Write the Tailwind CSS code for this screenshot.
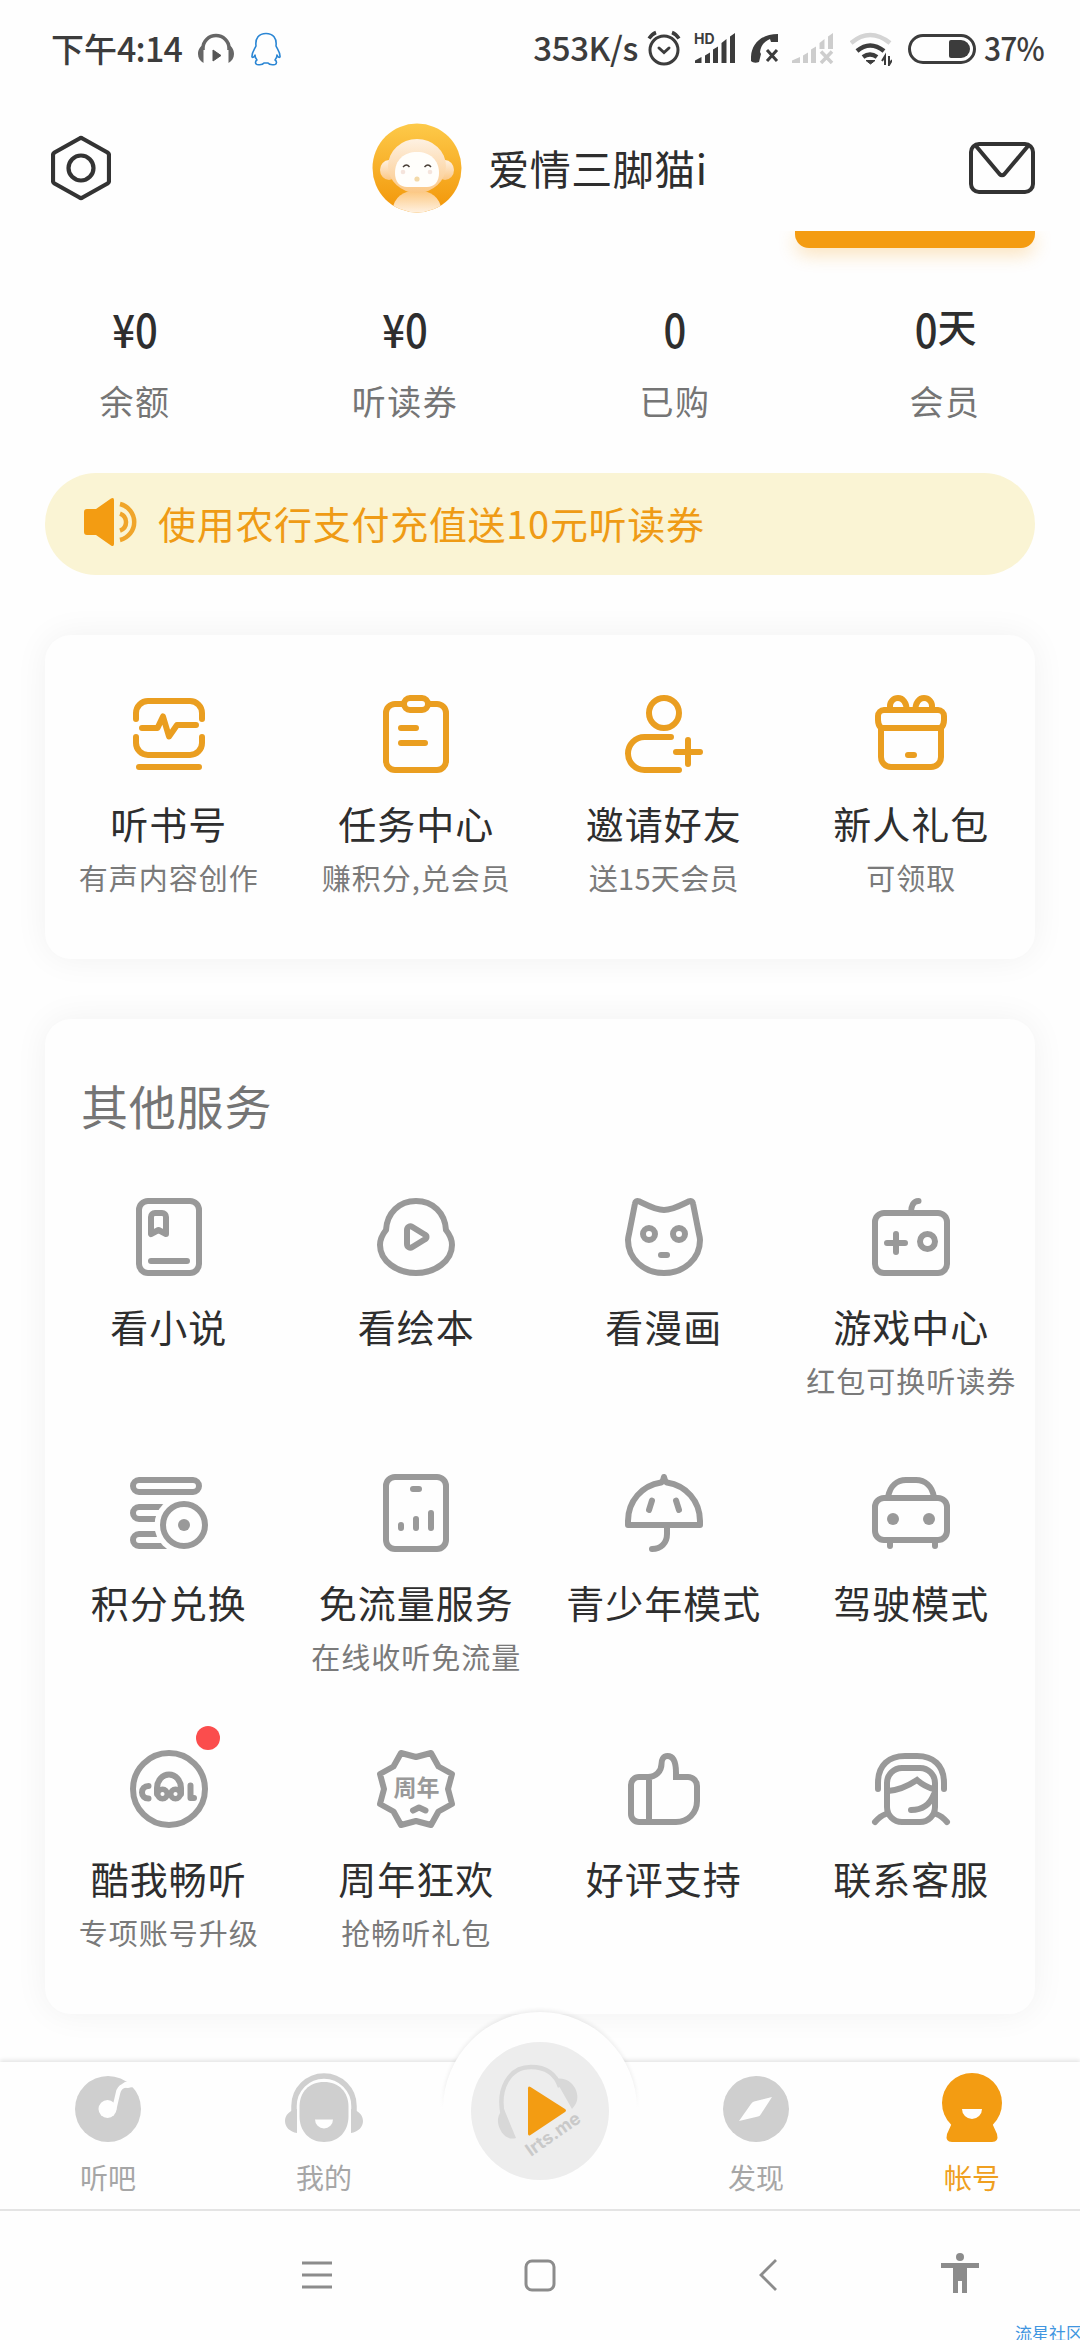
<!DOCTYPE html>
<html lang="zh-CN">
<head>
<meta charset="utf-8">
<title>帐号</title>
<script src="https://cdn.jsdelivr.net/npm/@tailwindcss/browser@4"></script>
</head>
<body class="w-[1080px] h-[2340px] overflow-hidden bg-[#fefefe] font-['Noto_Sans_CJK_SC',sans-serif] text-[#2e2e2e]">
<div class="relative flex flex-col w-[1080px] h-[2340px] overflow-hidden">

  <!-- status bar -->
  <header class="flex items-center h-[97px] pl-[51px] pr-[38px] text-[34px] leading-none font-medium text-[#3c3c3c] whitespace-nowrap">
    <span class="w-[147px] -mt-[2px] tracking-[-0.8px]"><span class="tracking-[0px] text-[33px]">下午</span>4:14</span>
    <svg class="w-[36px] h-[32px]" viewBox="0 0 36 32"><path d="M5 17v-2a13 12.500 0 0 1 26 0v2" fill="none" stroke="#666" stroke-width="3.500"/><path d="M5.500 12v18C2 28 0 25 0 21s2-8 5.500-9zM30.500 12v18c3.500-2 5.500-5 5.500-9s-2-8-5.500-9z" fill="#666"/><path d="M15 17l8 5.500-8 5.500z" fill="#555" stroke="#555" stroke-linejoin="round"/></svg>
    <svg class="w-[30px] h-[34px] ml-[17px]" viewBox="0 0 30 34" fill="none" stroke="#2b86d4" stroke-width="1.600" stroke-linejoin="round"><path d="M5 14C4 6 8 1.500 15 1.500S26 6 25 14c2 4 4.500 7 4 11-1 1-2 0-3-2 0 2-1 4-2 5 2 1 2 4 0 4.500-3 .5-6 0-7-1.500h-4c-1 1.500-4 2-7 1.500-2-.5-2-3.500 0-4.500-1-1-2-3-2-5-1 2-2 3-3 2-.5-4 2-7 4-11z"/></svg>
    <span class="ml-auto -mt-[3px] text-[33px] tracking-[-0.4px]">353K/s</span>
    <svg class="w-[34px] h-[36px] ml-[9px] -mt-[2px]" viewBox="0 0 34 36" fill="none" stroke="#3c3c3c" stroke-width="3" stroke-linecap="round"><circle cx="17" cy="20" r="14"/><path d="M12 18l5 4.500 5-4.500"/><path d="M2 8.500Q5 4 9 2.500M32 8.500Q29 4 25 2.500" stroke-width="3.500" stroke-linecap="butt"/></svg>
    <svg class="w-[42px] h-[32px] ml-[13px] -mt-[2px] overflow-visible" viewBox="0 0 42 32" fill="#3c3c3c"><path d="M1 31v-2.500l6.500-3.500v6zM11 23.500l5-3V31h-5zM19 17.500l5-3V31h-5zM27.500 11l5-4v24h-5zM36 4.500L41 1v30h-5z"/><text x="0" y="12" font-size="14" font-weight="bold" font-family="Inter">HD</text></svg>
    <svg class="w-[28px] h-[30px] ml-[15px] -mt-[2px]" viewBox="0 0 28 30"><path d="M0 28C-1 12 9 1 27 1v8h-7l-1-3c-5 2-9 6-10 13l1 2-2 8c-3 1-6 1-8-1z" fill="#3c3c3c"/><path d="M16 17l10 11M26 17L16 28" stroke="#3c3c3c" stroke-width="3"/></svg>
    <svg class="w-[42px] h-[32px] ml-[13px] -mt-[2px]" viewBox="0 0 42 32" fill="#cdcdcd"><path d="M0 31v-2.500L8 25v6zM11 23.500l5-3V31h-5zM19 17.500l5-3V31h-5zM27.500 11l5-4v10h-5zM36 4.500L41 1v16h-5z"/><path d="M29 19.500L40 31M40 19.500L29 31" stroke="#cdcdcd" stroke-width="3.500"/></svg>
    <svg class="w-[42px] h-[34px] ml-[16px]" viewBox="0 0 42 34" fill="none" stroke-width="4.500"><path d="M1 11Q20-5 40 11" stroke="#d4d4d4"/><path d="M7 19q13-11 27 0M13 25q7-5 14 0" stroke="#3c3c3c"/><path d="M16 28.500h9l-4.500 3.500z" fill="#3c3c3c" stroke="#3c3c3c" stroke-width="1"/><path d="M35 33v-9l-3 5M39 24v9l3-5" stroke="#3c3c3c" stroke-width="2"/></svg>
    <svg class="w-[68px] h-[30px] ml-[16px]" viewBox="0 0 68 30"><rect x="1.500" y="1.500" width="65" height="27" rx="13.500" fill="none" stroke="#3c3c3c" stroke-width="3"/><path d="M43 6h10a9 9 0 0 1 0 18H43a2 2 0 0 1-2-2V8a2 2 0 0 1 2-2z" fill="#3c3c3c"/></svg>
    <span class="ml-[8px] -mt-[3px] w-[58px] text-[33px] tracking-[-1px] origin-left scale-x-[0.91]">37%</span>
  </header>

  <!-- title bar -->
  <div class="flex items-center h-[134px] pl-[51px] pr-[45px]">
    <svg class="w-[60px] h-[66px] mt-2" viewBox="0 0 60 66" fill="none" stroke="#333" stroke-width="4.200" stroke-linejoin="round"><path d="M28.500 3.500q1.500-1 3 0l25 14q1.500 1 1.500 2.500v26q0 1.500-1.500 2.500l-25 14q-1.500 1-3 0l-25-14Q2 47.500 2 46V20q0-1.500 1.500-2.500z"/><circle cx="30" cy="33" r="12.500"/></svg>
    <div class="flex flex-1 items-center justify-center gap-[26px]">
      <svg class="w-[90px] h-[90px] mt-2" viewBox="0 0 90 90">
        <defs>
          <linearGradient id="sky" x1="0" y1="0" x2="0" y2="1"><stop offset="0" stop-color="#fdca4a"/><stop offset="1" stop-color="#f29507"/></linearGradient>
          <linearGradient id="fur" x1="0" y1="0" x2="0" y2="1"><stop offset="0" stop-color="#fef1e2"/><stop offset="1" stop-color="#fbc887"/></linearGradient>
          <linearGradient id="robe" x1="0" y1="0" x2="0" y2="1"><stop offset="0" stop-color="#fcc67c"/><stop offset="0.650" stop-color="#fff5ea"/></linearGradient>
          <clipPath id="disc"><circle cx="45" cy="45" r="44.500"/></clipPath>
        </defs>
        <g clip-path="url(#disc)"><rect width="90" height="90" fill="url(#sky)"/><ellipse cx="45" cy="86" rx="24" ry="19" fill="url(#robe)"/><ellipse cx="17" cy="47" rx="9" ry="10" fill="url(#fur)"/><ellipse cx="73" cy="47" rx="9" ry="10" fill="url(#fur)"/><ellipse cx="45" cy="43" rx="29" ry="27" fill="url(#fur)"/></g>
        <path d="M45 29c13 0 22 8 22 21 0 9-5 14-12 14H35c-7 0-12-5-12-14 0-13 9-21 22-21z" fill="#fffefb"/>
        <path d="M31 44q3.500-4 6.500 0M52.500 44q3.500-4 6.500 0" fill="none" stroke="#4a4038" stroke-width="1.400"/><circle cx="31" cy="49" r="2.300" fill="#f5e4dc"/><circle cx="58" cy="49" r="2.300" fill="#f5e4dc"/><circle cx="45" cy="56" r="2.600" fill="#f3d9a8"/>
      </svg>
      <span class="mt-[6px] text-[41px] leading-[56px] tracking-[0.5px]">爱情三脚猫i</span>
    </div>
    <svg class="w-[66px] h-[52px] mt-2" viewBox="0 0 66 52" fill="none" stroke="#333" stroke-width="4" stroke-linejoin="round"><rect x="2" y="2" width="62" height="48" rx="8"/><path d="M7 4l23.500 28q2.500 2.500 5 0L59 4"/></svg>
  </div>

  <!-- lower edge of the button scrolled under the title bar -->
  <div class="h-[49px] overflow-hidden pl-[795px]"><div class="w-[240px] h-[17px] rounded-b-[14px] bg-[#f49c12] shadow-[0_6px_18px_rgba(244,156,18,0.3)]"></div></div>

  <!-- balances -->
  <section class="grid grid-cols-4 h-[193px] text-center">
    <div><div class="h-[97px] leading-[96px] text-[46px] font-medium scale-x-[0.87]">¥0</div><div class="text-[34px] tracking-[1.500px] leading-[48px] text-[#757575]">余额</div></div>
    <div><div class="h-[97px] leading-[96px] text-[46px] font-medium scale-x-[0.87]">¥0</div><div class="text-[34px] tracking-[1.500px] leading-[48px] text-[#757575]">听读券</div></div>
    <div><div class="h-[97px] leading-[96px] text-[46px] font-medium scale-x-[0.87]">0</div><div class="text-[34px] tracking-[1.500px] leading-[48px] text-[#757575]">已购</div></div>
    <div><div class="flex justify-center h-[97px] leading-[96px] text-[46px] font-medium"><span class="scale-x-[0.87]">0</span><span class="-ml-[2px] text-[39px] leading-[91px]">天</span></div><div class="text-[34px] tracking-[1.500px] leading-[48px] text-[#757575]">会员</div></div>
  </section>

  <!-- notice -->
  <section class="flex items-center h-[102px] mx-[45px] px-[39px] gap-[17px] rounded-full bg-[#faf4d4] text-[#ef9b15]">
    <svg class="w-[57px] h-[48px] -mt-1" viewBox="0 0 57 48"><path d="M0 14q0-3 3-3h9L27 .5q3-1.500 3 1.500v44q0 3-3 1.500L12 37H3q-3 0-3-3z" fill="#f39c12"/><path d="M36 15.500a9 9 0 0 1 0 17M36 6a18.500 18.500 0 0 1 0 36" fill="none" stroke="#f0a52a" stroke-width="4.500"/></svg>
    <span class="-mt-[2px] text-[38px] tracking-[0.7px] leading-[60px]">使用农行支付充值送10元听读券</span>
  </section>

  <!-- main actions -->
  <section class="grid grid-cols-4 h-[324px] mx-[45px] mt-[60px] pt-[57px] rounded-[26px] bg-[#fefefe] shadow-[0_0_34px_rgba(0,0,0,0.055)] text-center text-[38px] tracking-[1px] whitespace-nowrap">
    <div class="flex flex-col items-center">
      <svg class="w-[84px] h-[84px]" viewBox="0 0 84 84" fill="none" stroke="#ea9e20" stroke-width="6" stroke-linecap="round" stroke-linejoin="round"><path d="M9 27v-6A12 12 0 0 1 21 9h42a12 12 0 0 1 12 12v6M9 45v6a12 12 0 0 0 12 12h42a12 12 0 0 0 12-12v-6M12 75h60M15 36h15.500L36 24.500l6 20L50 33h19"/></svg>
      <div class="mt-[20px] leading-[54px]">听书号</div><div class="mt-[7px] text-[29px] leading-[40px] text-[#7a7a7a]">有声内容创作</div>
    </div>
    <div class="flex flex-col items-center">
      <svg class="w-[84px] h-[84px]" viewBox="0 0 84 84" fill="none" stroke="#ea9e20" stroke-width="6" stroke-linecap="round" stroke-linejoin="round"><rect x="12" y="12" width="60" height="66" rx="9"/><rect x="30" y="6" width="24" height="12" rx="6" fill="#fefefe"/><path d="M27 36h15M27 51h24"/></svg>
      <div class="mt-[20px] leading-[54px]">任务中心</div><div class="mt-[7px] text-[29px] leading-[40px] text-[#7a7a7a]">赚积分,兑会员</div>
    </div>
    <div class="flex flex-col items-center">
      <svg class="w-[84px] h-[84px]" viewBox="0 0 84 84" fill="none" stroke="#ea9e20" stroke-width="6" stroke-linecap="round" stroke-linejoin="round"><circle cx="42" cy="21" r="15"/><path d="M49 45H22.500a16.500 16.500 0 0 0 0 33H57M54 60h24M66 48v24"/></svg>
      <div class="mt-[20px] leading-[54px]">邀请好友</div><div class="mt-[7px] text-[29px] tracking-[0.3px] leading-[40px] text-[#7a7a7a]">送15天会员</div>
    </div>
    <div class="flex flex-col items-center">
      <svg class="w-[84px] h-[84px]" viewBox="0 0 84 84" fill="none" stroke="#ea9e20" stroke-width="6" stroke-linecap="round" stroke-linejoin="round"><path d="M12 36h60c2-2 3-5 3-8v-4a6 6 0 0 0-6-6H15a6 6 0 0 0-6 6v4c0 3 1 6 3 8zM12 36v29a10 10 0 0 0 10 10h40a10 10 0 0 0 10-10V36M21 17v-3a8 8 0 0 1 8-8c5 0 8.500 5 8.500 11M63 17v-3a8 8 0 0 0-8-8c-5 0-8.500 5-8.500 11M39 63h6"/></svg>
      <div class="mt-[20px] leading-[54px]">新人礼包</div><div class="mt-[7px] text-[29px] leading-[40px] text-[#7a7a7a]">可领取</div>
    </div>
  </section>

  <!-- other services -->
  <section class="shrink-0 h-[995px] mx-[45px] mt-[60px] pt-[54px] rounded-[26px] bg-[#fefefe] shadow-[0_0_34px_rgba(0,0,0,0.055)]">
    <h2 class="h-[122px] pl-[36px] text-[47px] leading-[64px] tracking-[0.8px] text-[#757575]">其他服务</h2>
    <div class="grid grid-cols-4 auto-rows-[276px] text-center text-[38px] tracking-[1px] whitespace-nowrap">
      <div class="flex flex-col items-center">
        <svg class="w-[84px] h-[84px]" viewBox="0 0 84 84" fill="none" stroke="#999" stroke-width="6" stroke-linecap="round" stroke-linejoin="round"><rect x="12" y="6" width="60" height="72" rx="9"/><path d="M24 66h36M24 39V22a4 4 0 0 1 4-4h7a4 4 0 0 1 4 4v17l-7.500-4z"/></svg>
        <div class="mt-[20px] leading-[54px]">看小说</div>
      </div>
      <div class="flex flex-col items-center">
        <svg class="w-[84px] h-[84px]" viewBox="0 0 84 84" fill="none" stroke="#999" stroke-width="6" stroke-linecap="round" stroke-linejoin="round"><path d="M12 35C13 18 25 6 42 6s29 12 30 29c4 5 6 9 6 15 0 16-17 28-36 28S6 66 6 50c0-6 2-10 6-15z"/><path d="M33 35v14c0 3 3 4.500 5 3.200l13-8c2-1 2-3.400 0-4.400l-13-8c-2-1.200-5 .2-5 3.200z"/></svg>
        <div class="mt-[20px] leading-[54px]">看绘本</div>
      </div>
      <div class="flex flex-col items-center">
        <svg class="w-[84px] h-[84px]" viewBox="0 0 84 84" fill="none" stroke="#999" stroke-width="6" stroke-linecap="round" stroke-linejoin="round"><path d="M13 8.500c.3-2 1.800-3 4-2.200C25 10 33 15 42 15s17-5 25-8.700c2.200-.8 3.700.2 4 2.200L77 39c.6 2.500 1 4 1 6 0 19-16 33-36 33S6 64 6 45c0-2 .4-3.500 1-6z"/><circle cx="27" cy="39" r="6"/><circle cx="57" cy="39" r="6"/><path d="M39 60h6"/></svg>
        <div class="mt-[20px] leading-[54px]">看漫画</div>
      </div>
      <div class="flex flex-col items-center">
        <svg class="w-[84px] h-[84px]" viewBox="0 0 84 84" fill="none" stroke="#999" stroke-width="6" stroke-linecap="round" stroke-linejoin="round"><rect x="6" y="18" width="72" height="60" rx="9"/><path d="M42 18c0-7 2.500-12 7.500-12M18 48h18M27 39v18"/><circle cx="58.500" cy="46.500" r="7.500"/></svg>
        <div class="mt-[20px] leading-[54px]">游戏中心</div><div class="mt-[7px] text-[29px] leading-[40px] text-[#7a7a7a]">红包可换听读券</div>
      </div>

      <div class="flex flex-col items-center">
        <svg class="w-[84px] h-[84px]" viewBox="0 0 84 84" fill="none" stroke="#999" stroke-width="6"><rect x="6" y="9" width="66" height="12" rx="6"/><path d="M40 36H12a6 6 0 0 0 0 12h28M40 63H12a6 6 0 0 0 0 12h28"/><circle cx="57" cy="54" r="29.500" fill="#fefefe" stroke="none"/><circle cx="57" cy="54" r="21"/><circle cx="57" cy="54" r="6" fill="#999" stroke="none"/></svg>
        <div class="mt-[20px] leading-[54px]">积分兑换</div>
      </div>
      <div class="flex flex-col items-center">
        <svg class="w-[84px] h-[84px]" viewBox="0 0 84 84" fill="none" stroke="#999" stroke-width="6" stroke-linecap="round"><rect x="12" y="6" width="60" height="72" rx="9"/><path d="M39 18h6M27 54v3M42 48v9M57 42v15"/></svg>
        <div class="mt-[20px] leading-[54px]">免流量服务</div><div class="mt-[7px] text-[29px] leading-[40px] text-[#7a7a7a]">在线收听免流量</div>
      </div>
      <div class="flex flex-col items-center">
        <svg class="w-[84px] h-[84px]" viewBox="0 0 84 84" fill="none" stroke="#999" stroke-width="6" stroke-linecap="round" stroke-linejoin="round"><path d="M6 54v-4c0-20 14-35.500 33-38.500q2-1 3-5.500 1 4.500 3 5.500C64 14.500 78 30 78 50v4zM45 54v9c0 9-6 15-15 15M30 29.500L27 39M54 29.500l3 9.500"/></svg>
        <div class="mt-[20px] leading-[54px]">青少年模式</div>
      </div>
      <div class="flex flex-col items-center">
        <svg class="w-[84px] h-[84px]" viewBox="0 0 84 84" fill="none" stroke="#999" stroke-width="6" stroke-linecap="round" stroke-linejoin="round"><rect x="6" y="27" width="72" height="42" rx="9"/><path d="M19 26C21 15 28 9 37 9h10c9 0 16 6 18 17M21 70v5M66 70v5"/><g fill="#999" stroke="none"><circle cx="24" cy="48" r="6"/><circle cx="60" cy="48" r="6"/></g></svg>
        <div class="mt-[20px] leading-[54px]">驾驶模式</div>
      </div>

      <div class="flex flex-col items-center">
        <div class="relative">
          <svg class="block w-[84px] h-[84px]" viewBox="0 0 84 84" fill="none" stroke="#999" stroke-width="6" stroke-linecap="round" stroke-linejoin="round"><circle cx="42" cy="42" r="36"/><path d="M21.500 39c-4 0-6.500 3-6.500 6.500s2.500 6 6.500 6M30 47v-6a12 13.500 0 0 1 24 0v6M63.500 38.500V51H67"/><circle cx="35.500" cy="47" r="4.800" stroke-width="5.500"/><circle cx="48.500" cy="47" r="4.800" stroke-width="5.500"/></svg>
          <span class="absolute -top-[21px] left-[69px] w-6 h-6 rounded-full bg-[#fb4d4d]"></span>
        </div>
        <div class="mt-[20px] leading-[54px]">酷我畅听</div><div class="mt-[7px] text-[29px] leading-[40px] text-[#7a7a7a]">专项账号升级</div>
      </div>
      <div class="flex flex-col items-center">
        <svg class="w-[84px] h-[84px]" viewBox="0 0 84 84" fill="none" stroke="#999" stroke-width="6" stroke-linecap="round" stroke-linejoin="round"><path d="M27 6l15 4 15-4 7.500 13.500L78 27l-4 15 4 15-13.500 7.500L57 78l-15-4-15 4-7.500-13.500L6 57l4-15-4-15 13.500-7.500zM39 63.500l6-3 6.500 3"/><text x="42.500" y="48.500" text-anchor="middle" font-size="23" font-weight="bold" letter-spacing="0" fill="#999" stroke="none">周年</text></svg>
        <div class="mt-[20px] leading-[54px]">周年狂欢</div><div class="mt-[7px] text-[29px] leading-[40px] text-[#7a7a7a]">抢畅听礼包</div>
      </div>
      <div class="flex flex-col items-center">
        <svg class="w-[84px] h-[84px]" viewBox="0 0 84 84" fill="none" stroke="#999" stroke-width="6"><path d="M26 30h-9a8 8 0 0 0-8 8v29a8 8 0 0 0 8 8h37c12 0 21-9 21-21V39a9 9 0 0 0-9-9H54v-4c0-11-3-17-8.500-17-4.500 0-6 4-6 8 0 7-5.500 13-13.500 13zM27 30v45"/></svg>
        <div class="mt-[20px] leading-[54px]">好评支持</div>
      </div>
      <div class="flex flex-col items-center">
        <svg class="w-[84px] h-[84px]" viewBox="0 0 84 84" fill="none" stroke="#999" stroke-width="6" stroke-linecap="round"><path d="M9 42v-6C9 18 20 9 36 9h12c16 0 27 9 27 27v6"/><rect x="18" y="21" width="48" height="54" rx="15"/><path d="M19 44q14-1 29-11 8 7 17 9M42 63c11 0 19-5 23-16M17 67Q11 69 6 75M67 67q6 2 11 8"/></svg>
        <div class="mt-[20px] leading-[54px]">联系客服</div>
      </div>
    </div>
  </section>

  <!-- tab bar -->
  <nav class="relative shrink-0 h-[149px] mt-[48px] border-b-2 border-[#e4e4e4] bg-[#fefefe] shadow-[0_-2px_4px_rgba(0,0,0,0.1)]">
    <div class="absolute left-[443px] -top-[50px] w-[194px] h-[97px] rounded-t-full bg-[#fefefe] shadow-[0_-2px_4px_rgba(0,0,0,0.07)]"></div>
    <div class="absolute left-[436px] top-[24px] w-[208px] h-[40px] bg-linear-to-b from-[#fefefe]/0 to-[#fefefe] to-60%"></div>
    <div class="relative grid grid-cols-5 h-[147px] pt-[11px] text-center text-[28px] leading-[40px] text-[#a6a6a6]">
      <div class="flex flex-col items-center gap-[14px]">
        <svg class="w-[80px] h-[70px]" viewBox="-40 -36 80 70"><circle r="33" fill="#cfcfcf"/><circle cx="-.5" cy="0" r="9" fill="#fefefe"/><path d="M6 1l4-17c1.500-7 6-8.500 18-8" fill="none" stroke="#fefefe" stroke-width="4.500"/><path d="M13-22c1-4 4-6 8-5l7 3-8 3z" fill="#fefefe"/></svg>
        <span>听吧</span>
      </div>
      <div class="flex flex-col items-center gap-[14px]">
        <svg class="w-[80px] h-[70px]" viewBox="-40 -36 80 70"><path d="M-30 10V-3a30 30 0 0 1 60 0v13" fill="none" stroke="#cfcfcf" stroke-width="5.500"/><path d="M-27 0v24c-7-1-12-6-12-12s5-11 12-12zM27 0v24c7-1 12-6 12-12S34 1 27 0z" fill="#cfcfcf"/><path d="M0-27c15 0 24.500 10 24.500 25V7C24.500 22 15 33 0 33S-24.500 22-24.500 7v-9C-24.500-17-15-27 0-27z" fill="#cfcfcf"/><path d="M-9 10.500H9a9 9 0 0 1-18 0z" fill="#fefefe"/></svg>
        <span>我的</span>
      </div>
      <div></div>
      <div class="flex flex-col items-center gap-[14px]">
        <svg class="w-[80px] h-[70px]" viewBox="-40 -36 80 70"><circle r="33" fill="#cfcfcf"/><path d="M16-12L-2-7.500Q-4-7-5-5L-17 12 2 7.500Q4 7 5 5z" fill="#fefefe"/></svg>
        <span>发现</span>
      </div>
      <div class="flex flex-col items-center gap-[14px] text-[#ef9f20]">
        <svg class="w-[80px] h-[70px]" viewBox="-40 -36 80 70"><circle cy="-6" r="30" fill="#f39c12"/><path d="M-20 14h40l5 11q2 8-5 8h-40q-7 0-5-8z" fill="#f39c12"/><path d="M-10 0h20a10 10 0 0 1-20 0z" fill="#fefefe"/></svg>
        <span>帐号</span>
      </div>
    </div>
    <svg class="absolute left-[471px] -top-[20px] w-[138px] h-[138px]" viewBox="0 0 138 138"><circle cx="69" cy="69" r="69" fill="#ededed"/><path d="M32 74C26 47 38 25 60 25c16 0 25 8 29 20" fill="none" stroke="#d8d8d8" stroke-width="4.500"/><path d="M33 67c-6 4-8 12-4 20 3 7 9 11 16 9zM84 37c9-2 16 2 20 9 4 8 3 15-3 21z" fill="#d8d8d8"/><path d="M57 46.500q0-3 2.500-1.500L94 67q2 1.500 0 3L59.500 93Q57 94.500 57 91.500z" fill="#f39c12"/><text x="60" y="115" transform="rotate(-35 60 115)" font-family="Inter" font-weight="bold" font-size="18" fill="#c9c9c9">lrts.me</text></svg>
  </nav>

  <!-- system navigation -->
  <footer class="relative flex-1 bg-[#fefefe]">
    <div class="flex items-center h-[128px] pl-[302px] text-[#8c8c8c]">
      <svg class="w-[30px] h-[28px]" viewBox="0 0 30 28" stroke="currentColor" stroke-width="3"><path d="M0 2h30M0 14h30M0 26h30"/></svg>
      <svg class="w-[32px] h-[33px] ml-[192px]" viewBox="0 0 32 33" fill="none" stroke="currentColor" stroke-width="3"><rect x="2" y="2" width="28" height="29" rx="6"/></svg>
      <svg class="w-[20px] h-[34px] ml-[202px]" viewBox="0 0 20 34" fill="none" stroke="currentColor" stroke-width="2.800"><path d="M18 2L3 17l15 15"/></svg>
      <svg class="w-[38px] h-[40px] ml-[163px] -mt-1" viewBox="0 0 38 40" fill="currentColor"><circle cx="19" cy="4" r="4"/><path d="M0 10h38v5H26v25h-5V28h-4v12h-5V15H0z"/></svg>
    </div>
    <span class="absolute left-[1015px] top-[109px] text-[17px] leading-[26px] text-[#3f95e0] whitespace-nowrap">流星社区</span>
  </footer>
</div>
</body>
</html>
